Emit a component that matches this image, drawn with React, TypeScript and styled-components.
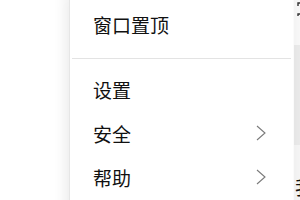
import React from 'react';
import styled, { createGlobalStyle } from 'styled-components';

const GlobalStyle = createGlobalStyle`
  html, body {
    margin: 0;
    padding: 0;
    background: #ffffff;
  }
  body {
    font-family: "Noto Sans CJK SC", "Noto Sans", sans-serif;
  }
`;

interface MenuEntry {
  label: string;
  sub?: boolean;
}

const topItems: MenuEntry[] = [{ label: '窗口置顶' }];
const mainItems: MenuEntry[] = [
  { label: '设置' },
  { label: '安全', sub: true },
  { label: '帮助', sub: true },
];

function Chevron() {
  return (
    <ChevronIcon viewBox="0 0 10 16" width="10" height="16">
      <polyline points="1,1 9,8 1,15" fill="none" stroke="#7a7a7a" strokeWidth="1.1" />
    </ChevronIcon>
  );
}

function MenuRow({ entry }: { entry: MenuEntry }) {
  return (
    <Row>
      <Label>{entry.label}</Label>
      {entry.sub && <Chevron />}
    </Row>
  );
}

function App() {
  return (
    <>
      <GlobalStyle />
      <Stage>
        <Backdrop>
          <MainArea />
          <SidePanel>
            <SideHead>
              <svg width="14" height="20" viewBox="0 0 14 20">
                <path d="M3 6 V3 H12 M3 16 V14 H12" fill="none" stroke="#333" strokeWidth="1.4" />
              </svg>
            </SideHead>
            <SideRow $active>
              <SideText>·</SideText>
            </SideRow>
            <SideRow>
              <SideText>我</SideText>
            </SideRow>
          </SidePanel>
        </Backdrop>
        <Menu>
          {topItems.map((e) => (
            <MenuRow key={e.label} entry={e} />
          ))}
          <Divider />
          {mainItems.map((e) => (
            <MenuRow key={e.label} entry={e} />
          ))}
        </Menu>
      </Stage>
    </>
  );
}

export default App;

const Stage = styled.div`
  position: relative;
  width: 300px;
  height: 200px;
  overflow: hidden;
  background: #ffffff;
`;

const Backdrop = styled.div`
  display: grid;
  grid-template-columns: 294px 200px;
  height: 200px;
`;

const MainArea = styled.div`
  background: #ffffff;
`;

const SidePanel = styled.div`
  display: flex;
  flex-direction: column;
  background: #f4f4f4;
`;

const SideHead = styled.div`
  height: 45px;
  padding-left: 1px;
  background: #f7f7f7;
`;

const SideRow = styled.div<{ $active?: boolean }>`
  height: ${({ $active }) => ($active ? '100px' : '55px')};
  display: flex;
  align-items: ${({ $active }) => ($active ? 'center' : 'flex-end')};
  padding-left: 1px;
  background: ${({ $active }) => ($active ? '#e9e9e9' : '#f4f4f4')};
`;

const SideText = styled.span`
  font-size: 19px;
  line-height: 26px;
  color: #111;
`;

const Menu = styled.div`
  position: absolute;
  left: 69px;
  top: -6px;
  width: 224px;
  height: 240px;
  box-sizing: border-box;
  padding-top: 8px;
  background: #ffffff;
  border-left: 1px solid #e6e6e6;
  box-shadow: -4px 0 12px rgba(0, 0, 0, 0.08);
  display: flex;
  flex-direction: column;
`;

const Row = styled.div`
  height: 44px;
  display: flex;
  align-items: center;
  justify-content: space-between;
  padding: 0 27px 0 23px;
`;

const Label = styled.span`
  font-size: 19px;
  color: #111111;
  line-height: 1;
`;

const ChevronIcon = styled.svg`
  display: block;
`;

const Divider = styled.div`
  height: 1px;
  margin: 12px 2px 8px 2px;
  background: #e3e3e3;
`;
